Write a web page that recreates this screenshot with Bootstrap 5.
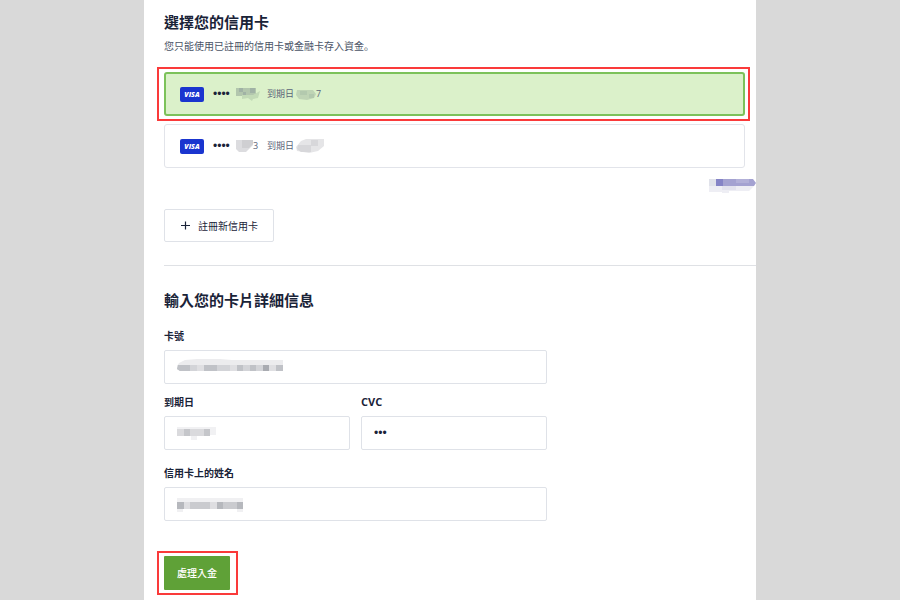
<!DOCTYPE html>
<html lang="zh-Hant">
<head>
<meta charset="utf-8">
<meta name="viewport" content="width=device-width, initial-scale=1">
<title>選擇您的信用卡</title>
<link href="https://cdn.jsdelivr.net/npm/bootstrap@5.3.0/dist/css/bootstrap.min.css" rel="stylesheet">
<style>
body { background: #d9d9d9; color: #1a2338; font-family: "Open Sans", "Noto Sans CJK TC", sans-serif; font-size: 10px; line-height: 16px; }
.sheet { width: 68%; min-height: 100vh; padding: 12px 0 5px 20px; }
.title { font-size: 15px; line-height: 20px; font-weight: 700; }
.hint { color: #4a5366; margin: 6px 0 18px; font-family: "Open Sans", "Noto Sans CJK SC", sans-serif; }
.choices { margin-right: 11px; gap: 8px; }
.choice { height: 44px; padding-left: 15px; border: 1px solid #e2e4ea; border-radius: 3px; cursor: pointer; }
.choice.chosen { background: #dbf1ca; border: 2px solid #7cc25a; padding-left: 14px; }
.dots { font-family: "Liberation Sans", sans-serif; font-size: 12px; width: 23px; margin-left: 9px; }
.ending { width: 31px; }
.expiry { font-size: 9px; color: #5a6378; }
.until { margin-left: 2px; }
.frame::after { content: ""; position: absolute; inset: -5px -8px -5px -7px; border: 2px solid #fa3a3a; pointer-events: none; }
.chosen.frame::after { inset: -7px -7px -7px -9px; }
.more { margin-top: 11px; line-height: 0; }
.add { height: 33px; padding: 0 15px; gap: 7px; margin-top: 16px; border: 1px solid #dfe2e8; border-radius: 2px; background: #fff; color: #1a2338; font-size: 10px; }
.rule { margin: 23px 0 24px; border-color: #dfe1e5; opacity: 1; }
.details { max-width: 383px; margin-top: 18px; }
.details label { font-weight: 700; margin-bottom: 6px; }
.details .latin { font-size: 11px; }
.pair { gap: 11px; margin: 10px 0 15px; }
.field { height: 34px; border: 1px solid #dfe2e8; border-radius: 2px; padding: 0 12px; color: #1a2338; font: 12px "Liberation Sans", sans-serif; }
.mask { position: absolute; left: 13px; top: 8px; pointer-events: none; }
.submit { height: 34px; padding: 0 13px; border: 0; border-radius: 1px; background: #5fa137; color: #fff; font-size: 10px; font-weight: 500; }
.send { margin-top: 35px; }
</style>
</head>
<body>
<main class="sheet bg-white mx-auto">
  <h1 class="title m-0">選擇您的信用卡</h1>
  <p class="hint" lang="zh-Hans">您只能使用已註冊的信用卡或金融卡存入資金。</p>

  <div class="choices d-flex flex-column">
    <label class="choice chosen frame d-flex align-items-center position-relative">
      <input class="visually-hidden" type="radio" name="cc" checked>
      <svg width="24" height="15" viewBox="0 0 24 15" role="img" aria-label="VISA"><rect width="24" height="15" rx="2" fill="#1a35cf"/><text x="12" y="10" text-anchor="middle" font-family="Open Sans, sans-serif" font-weight="800" font-style="italic" font-size="7" fill="#fff">VISA</text></svg>
      <span class="dots">••••</span>
      <span class="ending d-flex align-items-center"><svg width="24" height="16" aria-hidden="true"><path d="M0 2h20v8H0z" fill="#b2c6ad"/><path d="M3 2h4v4H3zM14 2h5v5h-5zM7 6h3v4H7z" fill="#a0b2a5"/><path d="M6 9h11l7-4-2 7-5 1-1 2-4-3-6 1z" fill="#c2dab6"/></svg></span>
      <span class="expiry">到期日</span>
      <svg width="20" height="14" class="until" aria-hidden="true"><path d="M1 3h16l3 4-2 4-7 2-8-1-3-4z" fill="#bfd4b5"/><path d="M4 4h7v4H4zM13 7h5v4h-5z" fill="#b3c9ae"/></svg>
      <span class="expiry">7</span>
    </label>
    <label class="choice d-flex align-items-center">
      <input class="visually-hidden" type="radio" name="cc">
      <svg width="24" height="15" viewBox="0 0 24 15" role="img" aria-label="VISA"><rect width="24" height="15" rx="2" fill="#1a35cf"/><text x="12" y="10" text-anchor="middle" font-family="Open Sans, sans-serif" font-weight="800" font-style="italic" font-size="7" fill="#fff">VISA</text></svg>
      <span class="dots">••••</span>
      <span class="ending d-flex align-items-center"><svg width="17" height="14" aria-hidden="true"><path d="M0 1h17v5l-7 7H3l-3-3z" fill="#dcdcdf"/><path d="M6 1h11v4l-4 4H6z" fill="#cfcfd2"/></svg><span class="expiry">3</span></span>
      <span class="expiry">到期日</span>
      <svg width="29" height="14" class="until" aria-hidden="true"><path d="M5 2 10 0h18v7l-6 5-9 2-12-2-1-4z" fill="#e5e5e7"/><path d="M2 6h13v7H5l-4-3zM15 1h7v6h-7z" fill="#d7d7da"/></svg>
    </label>
  </div>

  <div class="more text-end">
    <a href="#" aria-label="連結"><svg width="47" height="14" aria-hidden="true"><path d="M0 0h7v7H0z" fill="#e0e2ea"/><path d="M7 0h37l3 4-2 3H7z" fill="#a4a2d1"/><path d="M7 0h7v7H7z" fill="#8584c6"/><path d="M27 0h13v4H27z" fill="#b2b0d8"/><path d="M0 7h45l-5 5H20v2h-7v-1H0z" fill="#eeeef4"/><path d="M13 7h14v4H13z" fill="#e3e3ee"/></svg></a>
  </div>

  <button type="button" class="add d-inline-flex align-items-center">
    <svg width="11" height="11" viewBox="0 0 11 11" aria-hidden="true"><path d="M5.5 1.5v8M1 5.5h9" stroke="#1a2338" stroke-width="1.2" fill="none"/></svg>
    <span>註冊新信用卡</span>
  </button>

  <hr class="rule">

  <h2 class="title m-0">輸入您的卡片詳細信息</h2>
  <form>
    <div class="details">
      <label class="d-block" for="number">卡號</label>
      <div class="position-relative">
        <input class="field w-100 d-block" id="number" type="text">
        <svg class="mask" width="107" height="15" aria-hidden="true"><path d="M2 5 8 2 20 1h23L55 2h51v6H0z" fill="#ececee"/><path d="M1 7h105v6H3L0 11z" fill="#d3d4d8"/><path d="M1 7h12v6H3L0 11zM27 7h13v6H27zM60 7h6v6h-6zM73 7h6v6h-6zM99 7h7v6h-7z" fill="#c0c2c7"/><path d="M86 7h6v6h-6z" fill="#a9abb1"/><path d="M20 7h7v6h-7zM53 7h7v6h-7zM92 7h7v6h-7z" fill="#dfdfe2"/></svg>
      </div>
      <div class="pair d-flex">
        <div class="w-50">
          <label class="d-block" for="expires">到期日</label>
          <div class="position-relative">
            <input class="field w-100 d-block" id="expires" type="text">
            <svg class="mask" width="40" height="18" aria-hidden="true"><path d="M0 3h39v8H20v5h-6v-5H0z" fill="#f1f1f3"/><path d="M0 5h33v7H0z" fill="#dadadd"/><path d="M7 5h6v7H7zM27 5h6v7h-6z" fill="#c5c6ca"/></svg>
          </div>
        </div>
        <div class="w-50">
          <label class="latin d-block" for="cvc">CVC</label>
          <input class="field w-100 d-block" id="cvc" type="password" value="000">
        </div>
      </div>
      <label class="d-block" for="holder">信用卡上的姓名</label>
      <div class="position-relative">
        <input class="field w-100 d-block" id="holder" type="text">
        <svg class="mask" width="67" height="18" aria-hidden="true"><path d="M0 3h66v14h-6v-4H6v4H0z" fill="#f0f0f2"/><path d="M0 7h66v7H0z" fill="#cacbcf"/><path d="M0 7h7v7H0zM40 7h6v7h-6zM60 7h6v7h-6z" fill="#b6b8bd"/><path d="M7 7h6v7H7zM33 7h7v7h-7z" fill="#dedee1"/></svg>
      </div>
    </div>
    <div class="send frame d-inline-flex position-relative">
      <button type="submit" class="submit">處理入金</button>
    </div>
  </form>
</main>
<script src="https://cdn.jsdelivr.net/npm/bootstrap@5.3.0/dist/js/bootstrap.bundle.min.js"></script>
</body>
</html>
